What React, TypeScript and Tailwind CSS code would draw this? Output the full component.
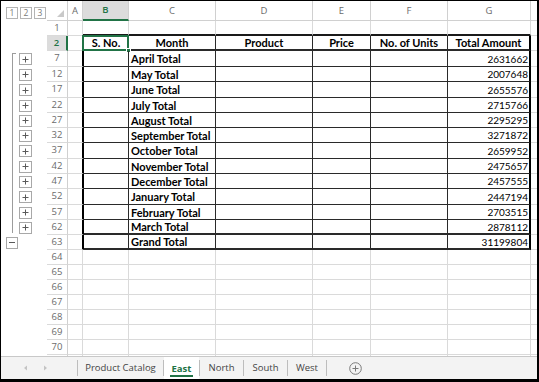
import React from 'react';

type RowKind = 'plain' | 'top' | 'head' | 'data' | 'grand';

interface RowDef {
  n: number;
  h: number;
  kind: RowKind;
  month?: string;
  total?: string;
  thick?: boolean;
  outline?: 'first' | 'mid' | 'last' | 'minus';
}

const dataRows: [number, string, string, number][] = [
  [7, 'April Total', '2631662', 16],
  [12, 'May Total', '2007648', 15],
  [17, 'June Total', '2655576', 16],
  [22, 'July Total', '2715766', 15],
  [27, 'August Total', '2295295', 15],
  [32, 'September Total', '3271872', 15],
  [37, 'October Total', '2659952', 16],
  [42, 'November Total', '2475657', 15],
  [47, 'December Total', '2457555', 15],
  [52, 'January Total', '2447194', 16],
  [57, 'February Total', '2703515', 15],
  [62, 'March Total', '2878112', 15],
];

const rows: RowDef[] = [
  { n: 1, h: 15, kind: 'top' },
  { n: 2, h: 15, kind: 'head', thick: true },
  ...dataRows.map(([n, m, t, h], i) => ({
    n,
    h,
    kind: 'data' as RowKind,
    month: m,
    total: t,
    thick: i === dataRows.length - 1,
    outline: (i === 0 ? 'first' : i === dataRows.length - 1 ? 'last' : 'mid') as RowDef['outline'],
  })),
  { n: 63, h: 15, kind: 'grand', month: 'Grand Total', total: '31199804', thick: true, outline: 'minus' },
  ...[64, 65, 66, 67, 68, 69, 70, 71].map((n) => ({ n, h: 15, kind: 'plain' as RowKind })),
];

function PlusBox() {
  return (
    <div className="ml-[3px] w-[13px] h-[12px] border border-[#a8a8a8] bg-white flex items-center justify-center self-center">
      <svg width="7" height="7" viewBox="0 0 7 7">
        <path d="M3.5 0.5V6.5M0.5 3.5H6.5" stroke="#5a5a5a" strokeWidth="1" />
      </svg>
    </div>
  );
}

function Outline({ o }: { o?: RowDef['outline'] }) {
  if (!o) return <div className="w-[46px] shrink-0" />;
  if (o === 'minus')
    return (
      <div className="w-[46px] shrink-0 flex items-center pl-[5px]">
        <div className="w-[12px] h-[12px] border border-[#a8a8a8] bg-white flex items-center justify-center">
          <svg width="6" height="1" viewBox="0 0 6 1">
            <path d="M0 0.5H6" stroke="#5a5a5a" strokeWidth="1" />
          </svg>
        </div>
      </div>
    );
  const lineCls =
    o === 'first'
      ? 'ml-[11px] mt-[2px] w-[4px] border-l border-t border-[#9c9c9c]'
      : o === 'last'
      ? 'ml-[11px] mb-[2px] w-[4px] border-l border-[#9c9c9c]'
      : 'ml-[11px] w-[4px] border-l border-[#9c9c9c]';
  return (
    <div className="w-[46px] shrink-0 flex items-stretch">
      <div className={lineCls} />
      <PlusBox />
    </div>
  );
}

function RowHead({ n, active }: { n: number; active?: boolean }) {
  return (
    <div
      className={
        'w-[21px] shrink-0 flex items-center justify-center border-b border-b-[#dadada] text-[9.5px] ' +
        (active
          ? 'bg-[#dcdcdc] text-[#217346] font-semibold border-r-2 border-r-[#217346]'
          : 'text-[#6b6b6b] border-r border-r-[#d0d0d0]')
      }
    >
      {n}
    </div>
  );
}

const widths = { B: 46, C: 87, D: 97, E: 58, F: 77, G: 83 };

function SheetRow({ r }: { r: RowDef }) {
  const isTable = r.kind === 'head' || r.kind === 'data' || r.kind === 'grand';
  const bb = r.thick ? 'border-b-2' : 'border-b';
  const lbl = "font-['Lato',sans-serif] text-[11px] font-bold text-black leading-none whitespace-nowrap";
  const num = "font-['Lato',sans-serif] text-[10px] text-black leading-none";
  return (
    <div className="flex shrink-0" style={{ height: r.h }}>
      <Outline o={r.outline} />
      <RowHead n={r.n} active={r.n === 2} />
      {isTable ? (
        <>
          <div className="w-[16px] shrink-0 border-r-2 border-r-black border-b border-b-[#dadada]" />
          <div className={`w-[45px] shrink-0 border-r border-r-[#2a2a2a] ${bb} border-b-[#2a2a2a] relative flex items-center justify-center ${lbl}`}>
            {r.kind === 'head' && (
              <>
                S. No.
                <div className="absolute left-[-2px] top-[-1px] right-[-1px] bottom-[-2px] border-2 border-[#217346]">
                  <div className="absolute right-[-4px] bottom-[-4px] w-[5px] h-[5px] bg-[#217346] border border-white" />
                </div>
              </>
            )}
          </div>
          <div className={`w-[87px] shrink-0 border-r border-r-[#2a2a2a] ${bb} border-b-[#2a2a2a] flex items-center ${lbl} ${r.kind === 'head' ? 'justify-center' : 'pl-[2px]'}`}>
            {r.kind === 'head' ? 'Month' : r.month}
          </div>
          <div className={`w-[97px] shrink-0 border-r border-r-[#2a2a2a] ${bb} border-b-[#2a2a2a] flex items-center justify-center ${lbl}`}>
            {r.kind === 'head' ? 'Product' : ''}
          </div>
          <div className={`w-[58px] shrink-0 border-r border-r-[#2a2a2a] ${bb} border-b-[#2a2a2a] flex items-center justify-center ${lbl}`}>
            {r.kind === 'head' ? 'Price' : ''}
          </div>
          <div className={`w-[77px] shrink-0 border-r border-r-[#2a2a2a] ${bb} border-b-[#2a2a2a] flex items-center justify-center ${lbl}`}>
            {r.kind === 'head' ? 'No. of Units' : ''}
          </div>
          <div className={`w-[83px] shrink-0 border-r-2 border-r-black ${bb} border-b-[#2a2a2a] flex items-center ${r.kind === 'head' ? 'justify-center ' + lbl : 'justify-end pr-[1px] ' + num}`}>
            {r.kind === 'head' ? 'Total Amount' : r.total}
          </div>
        </>
      ) : (
        <>
          <div className="w-[15px] shrink-0 border-r border-b border-[#dadada]" />
          {(['B', 'C', 'D', 'E', 'F', 'G'] as const).map((k) => (
            <div
              key={k}
              className={
                'shrink-0 border-r border-r-[#dadada] ' +
                (r.kind === 'top' ? 'border-b-2 border-b-[#1a1a1a]' : 'border-b border-b-[#dadada]')
              }
              style={{ width: widths[k] }}
            />
          ))}
        </>
      )}
      <div className="flex-1 border-b border-b-[#dadada]" />
    </div>
  );
}

function HeaderRow() {
  const letters: [string, number][] = [
    ['B', 46],
    ['C', 87],
    ['D', 97],
    ['E', 58],
    ['F', 77],
    ['G', 83],
  ];
  return (
    <div className="flex h-[20px] shrink-0 font-['Open_Sans',sans-serif] text-[9.5px] leading-none">
      <div className="w-[46px] shrink-0 flex items-start pt-[6px] pl-[5px] gap-[2px]">
        {['1', '2', '3'].map((t) => (
          <div key={t} className="w-[12px] h-[12px] border border-[#b4b4b4] text-[#7a7a7a] flex items-center justify-center text-[8.5px]">
            {t}
          </div>
        ))}
      </div>
      <div className="w-[21px] shrink-0 border-r border-b border-[#d0d0d0] flex items-end justify-end pr-[3px] pb-[3px]">
        <svg width="7" height="7" viewBox="0 0 7 7">
          <path d="M7 0L7 7L0 7Z" fill="#c9c9c9" />
        </svg>
      </div>
      <div className="w-[15px] shrink-0 border-r border-b border-[#d0d0d0] flex items-center justify-center text-[#6b6b6b]">A</div>
      {letters.map(([l, w]) => (
        <div
          key={l}
          className={
            'shrink-0 flex items-center justify-center ' +
            (l === 'B'
              ? 'bg-[#dcdcdc] text-[#217346] font-semibold border-r border-r-[#d0d0d0] border-b-2 border-b-[#217346]'
              : 'text-[#6b6b6b] border-r border-b border-[#d0d0d0]')
          }
          style={{ width: w }}
        >
          {l}
        </div>
      ))}
      <div className="flex-1 border-b border-[#d0d0d0]" />
    </div>
  );
}

function Sep() {
  return <div className="w-px shrink-0 bg-[#bdbdbd] my-[3px]" />;
}

function TabBar() {
  return (
    <div className="h-[23px] shrink-0 border-t border-[#c8c8c8] bg-[#f3f3f3] flex items-stretch font-['Open_Sans',sans-serif] text-[9.5px] text-[#444] leading-none">
      <div className="w-[76px] shrink-0 flex items-center pl-[22px] gap-[15px]">
        <svg width="5" height="6" viewBox="0 0 5 6">
          <path d="M4 0.5L1 3L4 5.5Z" fill="#c4c4c4" />
        </svg>
        <svg width="5" height="6" viewBox="0 0 5 6">
          <path d="M1 0.5L4 3L1 5.5Z" fill="#c4c4c4" />
        </svg>
      </div>
      <Sep />
      <div className="w-[85px] shrink-0 flex items-center justify-center">Product Catalog</div>
      <Sep />
      <div className="w-[35px] shrink-0 bg-white flex items-center justify-center">
        <span className="font-bold text-[#217346] border-b-2 border-[#217346] px-[2px] pt-[3px] pb-[2px] mt-[2px]">East</span>
      </div>
      <Sep />
      <div className="w-[43px] shrink-0 flex items-center justify-center">North</div>
      <Sep />
      <div className="w-[43px] shrink-0 flex items-center justify-center">South</div>
      <Sep />
      <div className="w-[38px] shrink-0 flex items-center justify-center">West</div>
      <Sep />
      <div className="flex items-center pl-[22px]">
        <svg width="13" height="13" viewBox="0 0 13 13">
          <circle cx="6.5" cy="6.5" r="5.8" fill="none" stroke="#7a7a7a" strokeWidth="1" />
          <path d="M6.5 3.5V9.5M3.5 6.5H9.5" stroke="#7a7a7a" strokeWidth="1" />
        </svg>
      </div>
    </div>
  );
}

export default function App() {
  return (
    <div className="w-[539px] h-[382px] bg-white border-l border-t border-r-2 border-b-[3px] border-black flex flex-col overflow-hidden">
      <div className="h-[355px] shrink-0 overflow-hidden flex flex-col">
        <HeaderRow />
        <div className="font-['Open_Sans',sans-serif]">
          {rows.map((r) => (
            <SheetRow key={r.n} r={r} />
          ))}
        </div>
      </div>
      <TabBar />
    </div>
  );
}
